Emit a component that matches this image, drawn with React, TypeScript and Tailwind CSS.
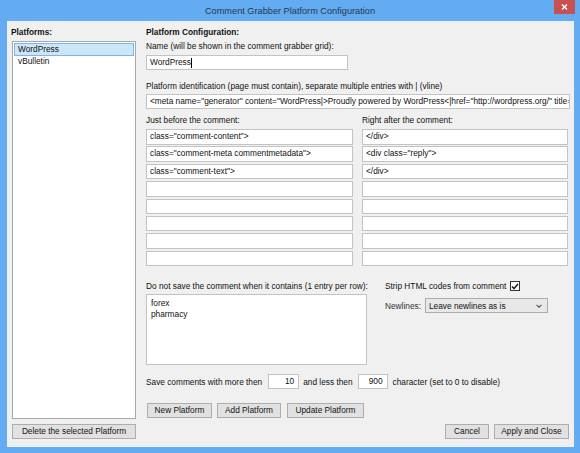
import React from "react";

const box = "bg-white border border-[#c3c3c3] h-[15px] leading-[13px] pl-[3px] whitespace-nowrap overflow-hidden";
const btn = "h-[15px] bg-[#e1e1e1] border border-[#adadad] leading-[13px] text-center whitespace-nowrap";

const before = ['class="comment-content">', 'class="comment-meta commentmetadata">', 'class="comment-text">', "", "", "", "", ""];
const after = ["</div>", '<div class="reply">', "</div>", "", "", "", "", ""];

function Rows({ items }: { items: string[] }) {
  return (
    <div className="flex flex-col gap-[1.9px]">
      {items.map((t, i) => (
        <div key={i} className="bg-white border border-[#c3c3c3] h-[15.5px] leading-[13.5px] pl-[3px] whitespace-nowrap overflow-hidden">
          {t}
        </div>
      ))}
    </div>
  );
}

export default function App() {
  return (
    <div className="w-[580px] h-[453px] bg-[#63acf1] flex flex-col font-['Liberation_Sans',Arial,sans-serif] text-[8.3px] text-[#111]">
      {/* title bar */}
      <div className="h-[21px] flex items-center justify-center relative">
        <span className="text-[9.2px] text-[#26384e] mt-[2px]">Comment Grabber Platform Configuration</span>
        <div className="absolute right-[5px] top-0 w-[21px] h-[14px] bg-[#c75050] flex items-center justify-center">
          <svg width="7" height="6" viewBox="0 0 7 6">
            <path d="M1 0.5 L6 5.5 M6 0.5 L1 5.5" stroke="white" strokeWidth="1.4" />
          </svg>
        </div>
      </div>

      {/* content */}
      <div className="ml-[7px] mr-[6px] h-[426px] bg-[#f0f0f0] flex pt-[5px] pl-[5px]">
        {/* platforms */}
        <div className="w-[124px] flex flex-col">
          <div className="font-bold leading-[12px] -ml-[1px]">Platforms:</div>
          <div className="mt-[3px] h-[378px] bg-white border border-[#a9a9a9] p-[1px]">
            <div className="h-[13px] leading-[11px] bg-[#cbe6f7] border border-[#7eb4ea] pl-[3px]">WordPress</div>
            <div className="h-[13px] leading-[11px] pl-[4px]">vBulletin</div>
          </div>
          <div className={`${btn} mt-[5px]`}>Delete the selected Platform</div>
        </div>

        {/* configuration */}
        <div className="ml-[10px] w-[424px] flex flex-col">
          <div className="font-bold leading-[12px]">Platform Configuration:</div>
          <div className="leading-[12px] mt-[2px]">Name (will be shown in the comment grabber grid):</div>
          <div className={`${box} mt-[3px] w-[202px] border-[#7eb4ea] flex items-center`}>
            WordPress<span className="w-[1px] h-[10px] bg-black" />
          </div>
          <div className="leading-[12px] mt-[10px] whitespace-nowrap">
            Platform identification (page must contain), separate multiple entries with | (vline)
          </div>
          <div className={`${box} mt-[2px]`}>
            {'<meta name="generator" content="WordPress|>Proudly powered by WordPress<|href="http://wordpress.org/" title="Semantic Personal Publishing Platform">'}
          </div>

          <div className="grid grid-cols-[207px_206px] gap-x-[9px] mt-[5px]">
            <div className="leading-[12px]">Just before the comment:</div>
            <div className="leading-[12px]">Right after the comment:</div>
            <div className="mt-[3px]">
              <Rows items={before} />
            </div>
            <div className="mt-[3px]">
              <Rows items={after} />
            </div>
          </div>

          <div className="flex mt-[14px]">
            <div className="w-[221px] flex flex-col">
              <div className="leading-[12px] whitespace-nowrap">Do not save the comment when it contains (1 entry per row):</div>
              <div className="mt-[2px] h-[71px] bg-white border border-[#c3c3c3] pl-[4px] pt-[3px] leading-[10.5px]">
                <div>forex</div>
                <div>pharmacy</div>
              </div>
            </div>
            <div className="ml-[18px] flex flex-col">
              <div className="flex items-center h-[12px]">
                <span className="whitespace-nowrap">Strip HTML codes from comment</span>
                <div className="ml-[4px] w-[10px] h-[10px] bg-white border border-[#333] flex items-center justify-center">
                  <svg width="8" height="7" viewBox="0 0 8 7">
                    <path d="M1 3.5 L3 5.6 L7 1" stroke="#222" strokeWidth="1.5" fill="none" />
                  </svg>
                </div>
              </div>
              <div className="flex items-center mt-[6px]">
                <span className="text-[#333]">Newlines:</span>
                <div className="ml-[4px] w-[123px] h-[15px] bg-[#e8e8e8] border border-[#acacac] flex items-center justify-between pl-[3px] pr-[5px]">
                  <span>Leave newlines as is</span>
                  <svg width="6" height="4" viewBox="0 0 6 4">
                    <path d="M0.5 0.8 L3 3.2 L5.5 0.8" stroke="#555" strokeWidth="1.1" fill="none" />
                  </svg>
                </div>
              </div>
            </div>
          </div>

          <div className="flex items-center mt-[9px] h-[15px] whitespace-nowrap">
            <span>Save comments with more then</span>
            <div className={`${box} ml-[6px] w-[31px] text-right pr-[4px]`}>10</div>
            <span className="ml-[4px]">and less then</span>
            <div className={`${box} ml-[5px] w-[30px] text-right pr-[4px]`}>900</div>
            <span className="ml-[5px]">character (set to 0 to disable)</span>
          </div>

          <div className="flex mt-[14px] ml-[1px] gap-[5px]">
            <div className={`${btn} w-[65px]`}>New Platform</div>
            <div className={`${btn} w-[64px]`}>Add Platform</div>
            <div className={`${btn} w-[77px] ml-[1px]`}>Update Platform</div>
          </div>

          <div className="flex justify-end mt-[6px] gap-[5px] pr-[1px]">
            <div className={`${btn} w-[44px]`}>Cancel</div>
            <div className={`${btn} w-[75px]`}>Apply and Close</div>
          </div>
        </div>
      </div>
    </div>
  );
}
